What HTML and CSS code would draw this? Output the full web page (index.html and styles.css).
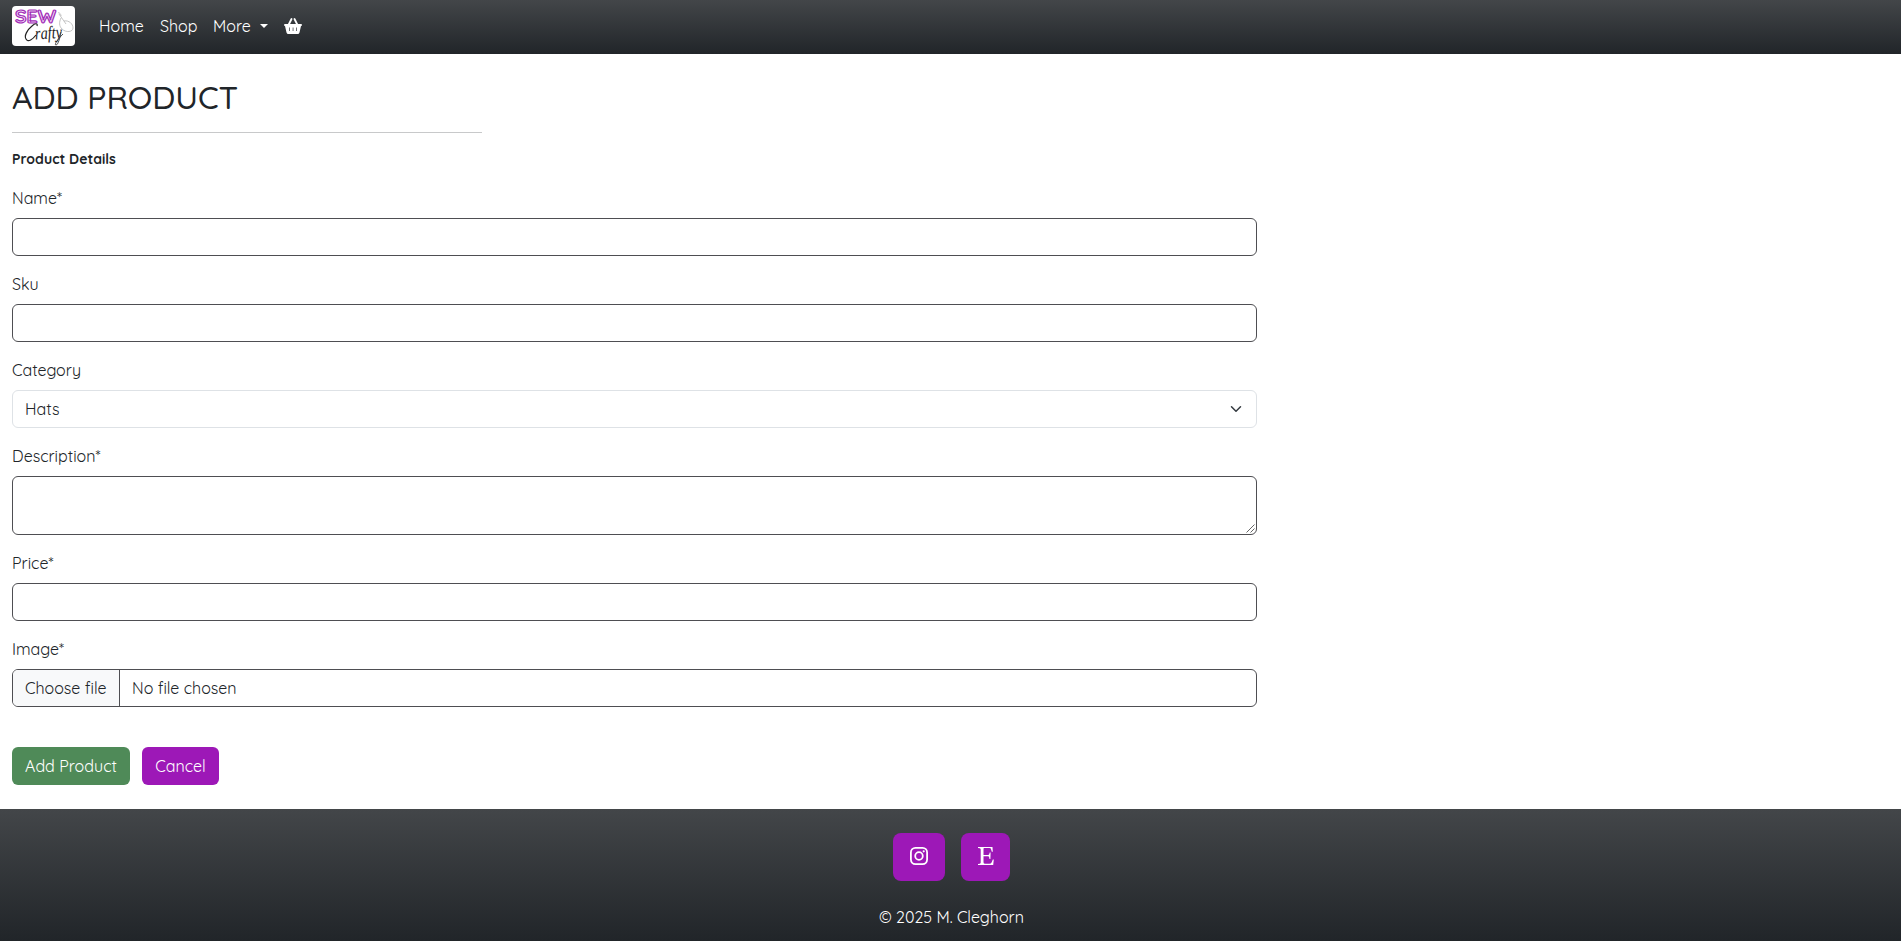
FILE: index.html
```html
<!DOCTYPE html>
<html lang="en">
<head>
<meta charset="utf-8">
<title>Sew Crafty</title>
<link rel="stylesheet" href="styles.css">
</head>
<body>
<nav class="navbar">
  <a class="brand"><svg width="63" height="40" viewBox="0 0 63 40">
    <rect width="63" height="40" rx="4" fill="#fff"/>
    <text class="logo-sew" x="3" y="16.500" textLength="41" lengthAdjust="spacingAndGlyphs">SEW</text>
    <g fill="none" stroke="#aaa" stroke-width=".7"><path d="M47 8l7 10M46 7c1-1 3 1 3 3M52 15c5-1 9 3 9 7s-7 5-11 1c-3-3-3-7-1-11"/></g>
    <text class="logo-crafty" x="23" y="33" textLength="27" lengthAdjust="spacingAndGlyphs" transform="rotate(-4 32 28)">rafty</text>
    <path d="M25 20c1-3-2-3-5 0-5 4-8 10-6 13 2 4 7 0 10-4" fill="none" stroke="#222" stroke-width="1.200"/>
    <path d="M49 26c-1 6-3 13-5 13s1-5 7-11" fill="none" stroke="#222" stroke-width=".8"/>
  </svg></a>
  <a class="nav-link home">Home</a>
  <a class="nav-link shop">Shop</a>
  <a class="nav-link more">More</a>
  <span class="caret"></span>
  <svg class="basket" width="18" height="16" viewBox="0 0 18 16"><path d="M4.500 7L7.500 1M13.500 7L10.500 1" stroke="#fff" stroke-width="1.8" stroke-linecap="round"/><path fill="#fff" fill-rule="evenodd" d="M1 6h16q1 0 1 1t-1 1l-1.500 6.500q-.4 1.500-1.800 1.500H4.300q-1.400 0-1.800-1.500L1 8Q0 8 0 7t1-1zM5.200 9.500v3.500h.7V9.500zm3.500 0v3.500h.7V9.500zM12.200 9.500v3.500h.7V9.500z"/></svg>
</nav>
<main class="content">
  <h1 class="title">ADD PRODUCT</h1>
  <hr class="rule">
  <p class="subtitle">Product Details</p>
  <form class="form">
    <div class="group"><label class="label">Name*</label><div class="control"></div></div>
    <div class="group"><label class="label">Sku</label><div class="control"></div></div>
    <div class="group"><label class="label">Category</label><div class="control select"><span>Hats</span><svg width="16" height="12" viewBox="0 0 16 16"><path d="M2 5l6 6 6-6" fill="none" stroke="#343a40" stroke-width="2" stroke-linecap="round" stroke-linejoin="round"/></svg></div></div>
    <div class="group"><label class="label">Description*</label><div class="control area"><svg width="9" height="9" viewBox="0 0 9 9"><path d="M.5 8.500l8-8M4.500 8.500l4-4" stroke="#555" stroke-width=".9"/></svg></div></div>
    <div class="group"><label class="label">Price*</label><div class="control"></div></div>
    <div class="group"><label class="label">Image*</label><div class="control file"><span class="choose">Choose file</span><span class="nofile">No file chosen</span></div></div>
    <div class="actions"><a class="btn add">Add Product</a><a class="btn cancel">Cancel</a></div>
  </form>
</main>
<footer class="footer">
  <div class="social">
    <a class="tile insta"><svg width="18" height="18" viewBox="0 0 18 18" fill="none" stroke="#fff"><rect x=".9" y=".9" width="16.200" height="16.200" rx="4.500" stroke-width="1.800"/><circle cx="9" cy="9" r="3.800" stroke-width="1.800"/><circle cx="13.700" cy="4.300" r="1.100" fill="#fff" stroke="none"/></svg></a>
    <a class="tile etsy"><svg width="16" height="18" viewBox="0 0 16 18"><path fill="#fff" d="M0 0h14.500l.3 4.800h-1L12.800 1.500Q12.500 1 11.500 1H6.200q-.7 0-.7.700V8H10q1 0 1.200-.7l.5-1.800h.9L12.400 12h-.9L11 9.800Q10.800 9.200 10 9.200H5.500v6q0 1.500 1.700 1.500h4q1.800 0 2.500-1.500L14.800 12.500h1L15.200 18H0v-.9l1.800-.4Q2.700 16.500 2.700 15.500V2.500Q2.700 1.500 1.800 1.300L0 .9z"/></svg></a>
  </div>
  <p class="copy">© 2025 M. Cleghorn</p>
</footer>
</body>
</html>
```
FILE: styles.css
```css
* { box-sizing: border-box; }
body { margin: 0; height: 941px; overflow: hidden; display: flex; flex-direction: column; background: #fff; color: #212529; font: 16px/24px Quicksand, Lato, sans-serif; }
.navbar { height: 54px; padding-left: 12px; display: flex; align-items: center; background: linear-gradient(#434649, #212529); color: #fff; }
.brand { height: 40px; margin: 0 24px 2px 0; }
.brand svg { display: block; }
.logo-sew { font: 700 18px Quicksand, Lato, sans-serif; fill: #f4def8; stroke: #a32fb8; stroke-width: 1.2px; }
.logo-crafty { font: italic 18px "Liberation Serif", serif; fill: #222; }
.nav-link { white-space: nowrap; flex: none; margin-bottom: 2px; }
.home { width: 61px; }
.shop { width: 53px; }
.more { width: 47px; }
.caret { width: 8px; height: 4px; border: 4px solid transparent; border-top-color: #fff; border-bottom: 0; margin-right: 16px; margin-bottom: 2px; }
.basket { margin-bottom: 2px; }
.content { padding: 24px 12px 0; height: 755px; }
.title { margin: 0; height: 54px; font-weight: 500; font-size: 32px; line-height: 39px; }
.rule { margin: 0; width: 470px; border: 0; border-top: 1px solid #c8c9ca; }
.subtitle { margin: 16px 0 0; height: 37px; font-size: 14px; line-height: 21px; font-weight: 700; }
.form { width: 1245px; }
.group { display: flex; flex-direction: column; gap: 8px; margin-bottom: 16px; }
.label { height: 24px; font-weight: 400; color: #212529; }
.control { height: 38px; border: 1px solid #4e4e52; border-radius: 6px; display: flex; align-items: center; color: #212529; }
.select { border-color: #dee2e6; padding: 0 12px; justify-content: space-between; }
.area { height: 59px; align-items: flex-end; justify-content: flex-end; padding: 0 1px 1px 0; }
.file { overflow: hidden; }
.choose { width: 107px; height: 100%; padding: 6px 12px; background: #f8f9fa; border-right: 1px solid #4e4e52; white-space: nowrap; }
.nofile { margin-left: 12px; }
.actions { margin-top: 40px; display: flex; gap: 12px; }
.btn { height: 38px; border-radius: 6px; color: #fff; display: flex; align-items: center; justify-content: center; white-space: nowrap; }
.add { width: 118px; background: #4f8a58; }
.cancel { width: 77px; background: #9d18b7; }
.footer { height: 132px; padding-top: 24px; background: linear-gradient(#434649, #212529); color: #fff; }
.social { display: flex; gap: 16px; justify-content: center; padding-left: 2px; }
.tile { height: 48px; padding-bottom: 2px; border-radius: 8px; background: #9d18b7; display: flex; align-items: center; justify-content: center; }
.insta { width: 52px; }
.etsy { width: 49px; }
.copy { margin: 24px 0 0; padding-left: 2px; text-align: center; }
```
